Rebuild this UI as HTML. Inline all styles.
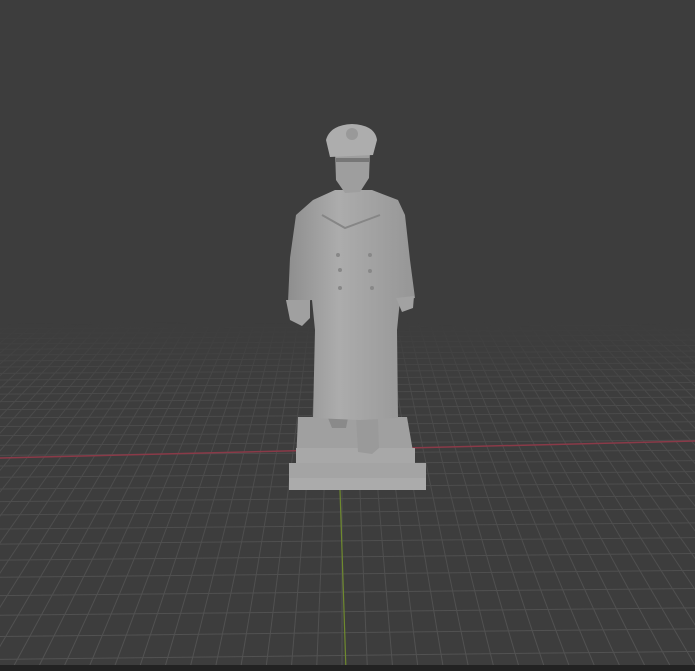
<!DOCTYPE html>
<html><head><style>
html,body{margin:0;padding:0;background:#3d3d3d;overflow:hidden}
svg{display:block}
</style></head><body>
<svg id="s" width="695" height="671" viewBox="0 0 695 671" xmlns="http://www.w3.org/2000/svg">
<defs>
<linearGradient id="fade" x1="0" y1="0" x2="0" y2="1">
<stop offset="0" stop-color="#fff" stop-opacity="0"/>
<stop offset="0.48" stop-color="#fff" stop-opacity="0"/>
<stop offset="0.58" stop-color="#fff" stop-opacity="0.6"/>
<stop offset="1" stop-color="#fff" stop-opacity="1"/>
</linearGradient>
<mask id="m"><rect width="695" height="671" fill="url(#fade)"/></mask>
<linearGradient id="coat" x1="0" y1="0" x2="1" y2="0">
<stop offset="0" stop-color="#8e8e8e"/><stop offset="0.4" stop-color="#acacac"/><stop offset="1" stop-color="#969696"/>
</linearGradient>
</defs>
<rect width="695" height="671" fill="#3d3d3d"/>
<g id="grid" mask="url(#m)" stroke="#535353" stroke-width="1" fill="none"></g>
<line x1="0" y1="458" x2="695" y2="441" stroke="#8a3a48" stroke-width="1.5"/>
<line x1="340" y1="490" x2="346" y2="671" stroke="#6f8a2e" stroke-width="1.2"/>
<!-- base -->
<polygon points="289,463 426,463 426,490 289,490" fill="#a4a4a4"/>
<polygon points="289,478 426,478 426,490 289,490" fill="#ababab"/>
<polygon points="298,417 407,417 415,463 296,463" fill="#a0a0a0"/>
<polygon points="296,448 415,448 415,463 296,463" fill="#a8a8a8"/>
<!-- boot -->
<path d="M356,418 L378,418 L379,448 L372,454 L358,452 Z" fill="#9a9a9a"/>
<path d="M328,418 L348,418 L346,428 L332,428 Z" fill="#8a8a8a"/>
<!-- coat -->
<path d="M313,200 L335,190 L372,190 L398,200 L405,215 L410,260 L415,298 L400,300 L397,330 L398,418 L360,420 L313,418 L315,330 L312,300 L288,302 L290,258 L296,215 Z" fill="url(#coat)"/>
<!-- hands -->
<path d="M286,300 L310,300 L310,318 L302,326 L290,320 Z" fill="#a0a0a0"/>
<path d="M396,298 L414,296 L413,308 L402,312 Z" fill="#a2a2a2"/>
<!-- lapels -->
<path d="M322,215 L345,228 L380,215" stroke="#868686" stroke-width="2" fill="none"/>
<g fill="#888"><circle cx="338" cy="255" r="2"/><circle cx="370" cy="255" r="2"/><circle cx="340" cy="270" r="2"/><circle cx="370" cy="271" r="2"/><circle cx="340" cy="288" r="2"/><circle cx="372" cy="288" r="2"/></g>
<!-- head -->
<path d="M335,150 L370,150 L369,178 L360,192 L345,193 L336,180 Z" fill="#9e9e9e"/>
<!-- cap -->
<path d="M326,140 Q330,125 352,124 Q375,125 377,140 L373,155 L330,157 Z" fill="#adadad"/>
<circle cx="352" cy="134" r="6" fill="#999"/>
<rect x="336" y="158" width="34" height="4" fill="#777"/>
<rect x="0" y="665" width="695" height="6" fill="#222"/>
</svg>
<script>
var g=document.getElementById('grid'),s='';
var vx=342,vy=60;
for(var k=-60;k<=60;k++){s+='<line x1="'+(vx+k*25*(300-vy)/600)+'" y1="300" x2="'+(vx+k*25*(671-vy)/600)+'" y2="671"/>';}
for(var u=1/620;u<1/250;u+=24/360000){var y=vy+1/u;var t=(y-vy)/600;s+='<line x1="0" y1="'+(y+4*t)+'" x2="695" y2="'+(y-4*t)+'"/>';}
g.innerHTML=s;
</script>
</body></html>
